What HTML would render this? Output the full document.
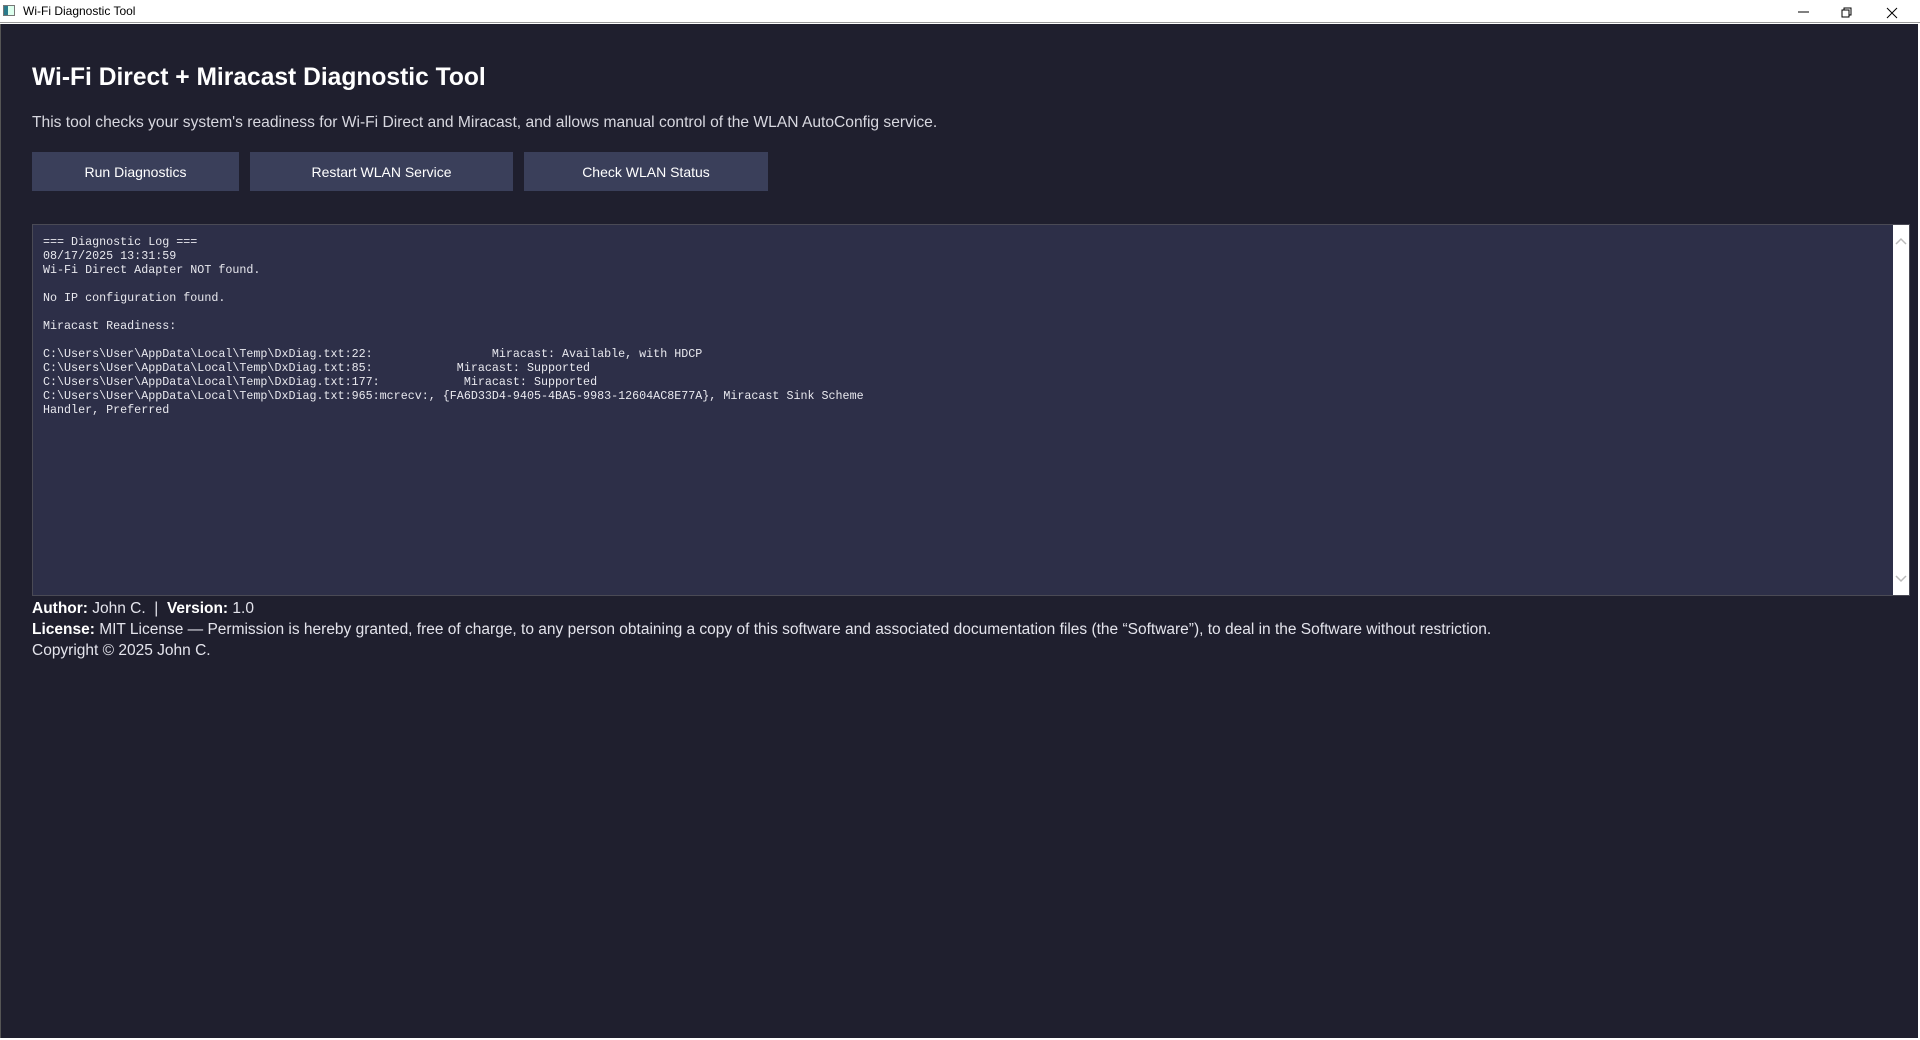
<!DOCTYPE html>
<html><head><meta charset="utf-8"><style>
*{margin:0;padding:0;box-sizing:border-box}
body{width:1920px;height:1040px;background:#fff;position:relative;overflow:hidden;font-family:"Liberation Sans",sans-serif}
#tb{position:absolute;left:0;top:0;width:1920px;height:23px;background:#fff;border-bottom:1px solid #9a9a9a}
#tb .t{position:absolute;left:23px;top:4px;font-size:12px;color:#000}
#tb .ic{position:absolute;left:3px;top:5px;width:12px;height:11px;border:1px solid #777;background:linear-gradient(90deg,#2a7a8a 40%,#dfe 40%)}
#win{position:absolute;left:0;top:24px;width:1918px;height:1014px;background:#1f1f2e;border-left:1px solid #555}
h1{position:absolute;left:32px;top:64px;font-size:24.6px;font-weight:bold;color:#fff}
.desc{position:absolute;left:32px;top:114px;font-size:15.6px;color:#d8d8e0}
.btn{position:absolute;top:152px;height:39px;background:#3a3f5a;color:#fff;font-size:14px;display:flex;align-items:center;justify-content:center}
#log{position:absolute;left:32px;top:224px;width:1878px;height:372px;background:#2d2f48;border:1px solid #4a4a55}
#log pre{position:absolute;left:10px;top:10px;font-family:"Liberation Mono",monospace;font-size:11.7px;line-height:14px;color:#e8e8ee}
#sb{position:absolute;right:0;top:0;width:16px;height:100%;background:#fff}
.ft{position:absolute;left:32px;font-size:15.5px;color:#e4e4ec}
.ft b{color:#fff}
</style></head><body>
<div id="tb"><div class="ic"></div><div class="t">Wi-Fi Diagnostic Tool</div>
<svg style="position:absolute;left:1790px;top:4px" width="120" height="16"><line x1="8" y1="8" x2="19" y2="8" stroke="#000"/><rect x="52" y="6" width="7" height="7" fill="none" stroke="#000"/><path d="M54 6V4h7v7h-2" fill="none" stroke="#000"/><path d="M97 4l10 10M107 4l-10 10" stroke="#000"/></svg>
</div>
<div id="win"></div>
<h1>Wi-Fi Direct + Miracast Diagnostic Tool</h1>
<div class="desc">This tool checks your system's readiness for Wi-Fi Direct and Miracast, and allows manual control of the WLAN AutoConfig service.</div>
<div class="btn" style="left:32px;width:207px">Run Diagnostics</div>
<div class="btn" style="left:250px;width:263px">Restart WLAN Service</div>
<div class="btn" style="left:524px;width:244px">Check WLAN Status</div>
<div id="log"><pre>=== Diagnostic Log ===
08/17/2025 13:31:59
Wi-Fi Direct Adapter NOT found.

No IP configuration found.

Miracast Readiness:

C:\Users\User\AppData\Local\Temp\DxDiag.txt:22:                 Miracast: Available, with HDCP
C:\Users\User\AppData\Local\Temp\DxDiag.txt:85:            Miracast: Supported
C:\Users\User\AppData\Local\Temp\DxDiag.txt:177:            Miracast: Supported
C:\Users\User\AppData\Local\Temp\DxDiag.txt:965:mcrecv:, {FA6D33D4-9405-4BA5-9983-12604AC8E77A}, Miracast Sink Scheme
Handler, Preferred</pre>
<div id="sb"><svg style="position:absolute;left:2px;top:12px" width="12" height="8"><path d="M1 7l5-5 5 5" fill="none" stroke="#bbb" stroke-width="1.5"/></svg><svg style="position:absolute;left:2px;bottom:12px" width="12" height="8"><path d="M1 1l5 5 5-5" fill="none" stroke="#bbb" stroke-width="1.5"/></svg></div>
</div>
<div class="ft" style="top:600px"><b>Author:</b> John C. &nbsp;| &nbsp;<b>Version:</b> 1.0</div>
<div class="ft" style="top:621px"><b>License:</b> MIT License — Permission is hereby granted, free of charge, to any person obtaining a copy of this software and associated documentation files (the “Software”), to deal in the Software without restriction.</div>
<div class="ft" style="top:642px">Copyright © 2025 John C.</div>
</body></html>
